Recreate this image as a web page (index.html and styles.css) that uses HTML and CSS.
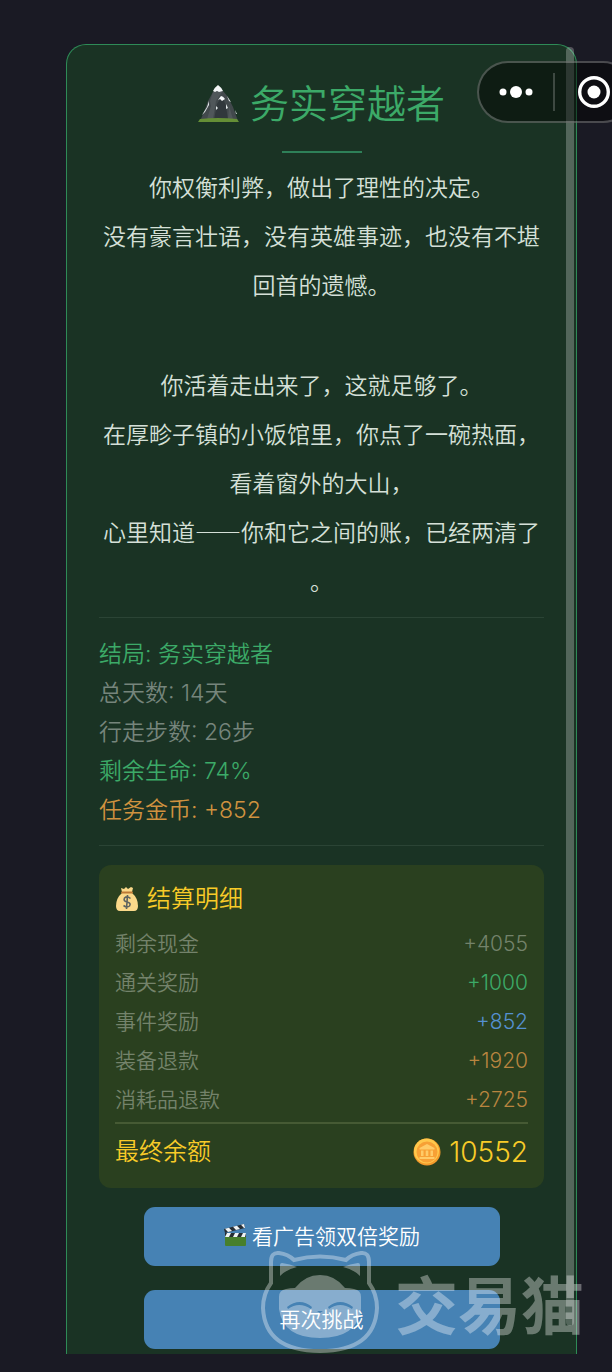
FILE: index.html
```html
<!DOCTYPE html>
<html lang="zh-CN">
<head>
    <meta charset="UTF-8">
    <meta name="viewport" content="width=device-width, initial-scale=1.0">
    <title>务实穿越者</title>
    <link rel="stylesheet" href="styles.css">
</head>
<body>
    <main class="card">
        <h1 class="title">
            <svg class="icon_title" viewBox="0 0 42 40" aria-hidden="true">
                <path d="M2 37 L6 28 L10 17 L15 8 L20 2 L25 7 L30 13 L35 23 L40 37Z" fill="#42494c"/>
                <path d="M15 8 L12 17 L13 22 L9 35 H15 L18 17 L24 8Z" fill="#50575a"/>
                <path d="M20 1 Q16 4 15 7 L17 8 L19 7 L21 8 L25 7 Q23 3 20 1Z" fill="#f4f7f8"/>
                <path d="M24 12 L19 20 L16 36 H30 L28 22Z" fill="#31383c"/>
                <path d="M23 12 L20 16 L22 15 L24 17 L27 15 Q25 12 23 12Z" fill="#f4f7f8"/>
                <path d="M11 17 L9 23 L4 31 L7 28 L11 21Z M29 12 L33 18 L31 17Z M37 26 L39 30 L38 30Z M28 20 L30 24 L28 25Z M18 22 L20 24 L18 26Z" fill="#e3e9ea"/>
                <path d="M31 22 L35 35 H30Z" fill="#50575a"/>
                <path d="M2 35 Q20 33 39 35 L41 38 H0Z" fill="#658f36"/>
            </svg>
            <span>务实穿越者</span>
        </h1>
        <div class="title_line"></div>

        <div class="story">
            <p>你权衡利弊，做出了理性的决定。<br>没有豪言壮语，没有英雄事迹，也没有不堪回首的遗憾。</p>
            <p>你活着走出来了，这就足够了。<br>在厚畛子镇的小饭馆里，你点了一碗热面，看着窗外的大山，<br>心里知道——你和它之间的账，已经两清了。</p>
        </div>

        <ul class="stats">
            <li class="green">结局: 务实穿越者</li>
            <li>总天数: 14天</li>
            <li>行走步数: 26步</li>
            <li class="green">剩余生命: 74%</li>
            <li class="orange">任务金币: +852</li>
        </ul>

        <section class="bill">
            <h2 class="bill_title">
                <svg class="icon_bag" viewBox="0 0 24 26" aria-hidden="true">
                    <path d="M7 7 Q1 12 1 20 Q1 25 5 25 H19 Q23 25 23 20 Q23 12 17 7Z" fill="#fbd98a"/>
                    <path d="M7 6 L6 2 L9 3 L11 1 L13 3 L16 1 L18 2 L17 6Z" fill="#fbd98a"/>
                    <path d="M7 6.5 H17" stroke="#bd7a35" stroke-width="2" stroke-linecap="round"/>
                    <path d="M15.5 12.5 Q12 9.5 9.5 12 Q8 15 12 16 Q16.5 17 14.5 20 Q12 22 8.5 19.5 M12.5 9 L11.5 23" fill="none" stroke="#5e6360" stroke-width="1.6"/>
                </svg>
                <span>结算明细</span>
            </h2>
            <dl class="rows">
                <div class="row"><dt>剩余现金</dt><dd>+4055</dd></div>
                <div class="row"><dt>通关奖励</dt><dd class="green">+1000</dd></div>
                <div class="row"><dt>事件奖励</dt><dd class="blue">+852</dd></div>
                <div class="row"><dt>装备退款</dt><dd class="orange">+1920</dd></div>
                <div class="row"><dt>消耗品退款</dt><dd class="orange">+2725</dd></div>
                <div class="row total">
                    <dt>最终余额</dt>
                    <dd>
                        <svg class="icon_coin" viewBox="0 0 28 28" aria-hidden="true">
                            <circle cx="14" cy="14" r="13.5" fill="#f39a2c"/>
                            <circle cx="13.5" cy="13" r="12.5" fill="#ffc84c"/>
                            <circle cx="14" cy="14" r="10.5" fill="#f7a035"/>
                            <path d="M6.5 10 L14 6 L21.5 10 V11.5 H6.5Z M8 12.5 H10.5 V18 H8Z M12.7 12.5 H15.3 V18 H12.7Z M17.5 12.5 H20 V18 H17.5Z M6.5 19 H21.5 V21 H6.5Z" fill="#ffcb68"/>
                        </svg>
                        <span>10552</span>
                    </dd>
                </div>
            </dl>
        </section>

        <div class="buttons">
            <button type="button">
                <svg class="icon_clap" viewBox="0 0 24 24" aria-hidden="true">
                    <path d="M2 11 H23 V22 Q23 23 22 23 H3 Q2 23 2 22Z" fill="#477f2c"/>
                    <path d="M2 10 H23 V14 H2Z" fill="#262d33"/>
                    <path d="M4 10 H8 L6 14 H2Z M12 10 H16 L14 14 H10Z M20 10 H23 L22 14 H18Z" fill="#eef2f4"/>
                    <path d="M1 6 L21 1 L22 5 L2 10Z" fill="#262d33"/>
                    <path d="M2 5.7 L6 4.7 L9 8 L5 9Z M10 3.7 L14 2.7 L17 6 L13 7Z M18 1.7 L21 1 L22 5 L21 5Z" fill="#eef2f4"/>
                </svg>
                <span>看广告领双倍奖励</span>
            </button>
            <button type="button">再次挑战</button>
        </div>
        <div class="scrollbar"></div>

        <div class="watermark" aria-hidden="true">
            <svg class="cat" viewBox="0 0 118 104">
                <path d="M10 33 V12 Q10 2 18 3 Q27 4 33 10 Q59 3 85 10 Q91 4 100 3 Q108 2 108 12 V33 Q116 44 116 58 Q114 101 59 101 Q4 101 2 58 Q2 44 10 33Z" fill="none" stroke="#fff" stroke-width="4"/>
                <path d="M19 15 Q19 13 21 13 Q29 14 36 17 Q26 19 19 26Z M99 15 Q99 13 97 13 Q89 14 82 17 Q92 19 99 26Z" fill="#fff"/>
                <path fill-rule="evenodd" d="M25 39 Q29 38 34 38 Q44 25 59 25 Q74 25 84 38 Q89 38 93 39 Q100 40 100 47 V59 Q96 88 59 88 Q22 88 18 59 V47 Q18 40 25 39Z M26 57 Q39 47 51 57 L50 59 Q38 51 27 59Z M67 57 Q79 47 92 57 L91 59 Q79 51 68 59Z M56 61 H62 L59 63Z" fill="#fff"/>
            </svg>
            <span>交易猫</span>
        </div>
    </main>

    <div class="capsule">
        <button type="button" class="menu" aria-label="更多">
            <svg viewBox="0 0 34 14"><circle cx="4" cy="7" r="3.5"/><circle cx="17" cy="7" r="6"/><circle cx="30" cy="7" r="3.5"/></svg>
        </button>
        <button type="button" class="close" aria-label="关闭">
            <svg viewBox="0 0 32 32"><circle cx="16" cy="16" r="14.3" fill="none" stroke="#fff" stroke-width="3.4"/><circle cx="16" cy="16" r="6.5"/></svg>
        </button>
    </div>
</body>
</html>
```
FILE: styles.css
```css
* {
    box-sizing: border-box;
}
body {
    margin: 0;
    padding: 44px 35px 18px 66px;
    position: relative;
    overflow-x: hidden;
    font-family: Inter, "Noto Sans CJK SC", sans-serif;
    font-weight: 350;
    background-color: #1a1a24;
    color: #d5e0d8;
}
h1, h2, p, ul, dl, dd {
    margin: 0;
    padding: 0;
    font-weight: inherit;
}
button {
    border: none;
    padding: 0;
    font-family: inherit;
    font-weight: inherit;
    color: white;
}
.card {
    position: relative;
    padding: 31px 32px 5px;
    background-color: #1a3324;
    border: 1px solid #2e8b57;
    border-bottom: none;
    border-radius: 20px 20px 0 0;
}
.title {
    display: flex;
    justify-content: center;
    align-items: center;
    gap: 10px;
    font-size: 39px;
    line-height: 56px;
    color: #3caa68;
}
.icon_title {
    width: 42px;
    height: 40px;
}
.title_line {
    width: 80px;
    height: 2px;
    margin: 19px auto 9px;
    background-color: #2e8058;
}

/* story text */
.story {
    font-family: "Noto Sans CJK SC", sans-serif;
    font-size: 23px;
    line-height: 49px;
    text-align: center;
    line-break: anywhere;
    text-spacing-trim: space-all;
}
.story p + p {
    margin-top: 51px;
}

.stats {
    margin-top: 12px;
    padding: 17px 0 15px;
    border-top: 1px solid #2b4435;
    border-bottom: 1px solid #2b4435;
    list-style: none;
    font-size: 23px;
    line-height: 39px;
    color: #76857c;
}
.stats .green, .rows .green {
    color: #3caa68;
}
.stats .orange {
    color: #d0923f;
}

/* settlement */
.bill {
    margin-top: 19px;
    padding: 17px 16px 20px;
    border-radius: 12px;
    background-color: #2a401f;
}
.bill_title {
    display: flex;
    align-items: center;
    gap: 8px;
    margin-bottom: 9px;
    font-size: 24px;
    line-height: 33px;
    color: #f8cb28;
}
.icon_bag {
    width: 24px;
    height: 26px;
}
.row {
    display: flex;
    justify-content: space-between;
    font-size: 21px;
    line-height: 39px;
    color: #74836b;
}
.rows .blue {
    color: #5590d0;
}
.rows .orange {
    color: #b9853f;
}
.total {
    margin-top: 3px;
    padding-top: 12px;
    border-top: 2px solid #465a34;
    font-size: 24px;
    line-height: 32px;
    color: #f8cb28;
}
.total dd {
    display: flex;
    align-items: center;
    gap: 8px;
    font-size: 28px;
}
.icon_coin {
    width: 28px;
    height: 28px;
}

.buttons {
    display: flex;
    flex-direction: column;
    align-items: center;
    gap: 24px;
    margin-top: 19px;
}
.buttons button {
    display: flex;
    align-items: center;
    justify-content: center;
    gap: 5px;
    width: 80%;
    height: 59px;
    padding-bottom: 3px;
    border-radius: 11px;
    background-color: #4682b4;
    font-size: 21px;
}
.icon_clap {
    width: 24px;
    height: 24px;
}

.scrollbar {
    position: absolute;
    top: 2px;
    right: 2px;
    bottom: 28px;
    width: 8px;
    border-radius: 4px;
    background-color: rgba(255, 255, 255, 0.25);
}

.watermark {
    position: absolute;
    right: -8px;
    bottom: -4px;
    display: flex;
    align-items: center;
    gap: 16px;
    font-size: 63px;
    font-weight: 700;
    line-height: 104px;
    color: white;
    opacity: 0.35;
    pointer-events: none;
}
.watermark span {
    padding-top: 9px;
}
.cat {
    width: 118px;
    height: 104px;
}

/* mini program menu, runs off the right edge */
.capsule {
    position: absolute;
    top: 61px;
    right: -22px;
    display: flex;
    align-items: center;
    width: 157px;
    height: 62px;
    border: 2px solid rgba(255, 255, 255, 0.25);
    border-radius: 31px;
    background-color: rgba(0, 0, 0, 0.45);
}
.capsule button {
    display: flex;
    justify-content: center;
    align-items: center;
    height: 38px;
    background: none;
}
.capsule svg {
    fill: white;
}
.capsule .menu {
    width: 77px;
    border-right: 2px solid rgba(255, 255, 255, 0.2);
}
.menu svg {
    width: 34px;
    height: 14px;
}
.capsule .close {
    width: 78px;
}
.close svg {
    width: 32px;
    height: 32px;
}
```
